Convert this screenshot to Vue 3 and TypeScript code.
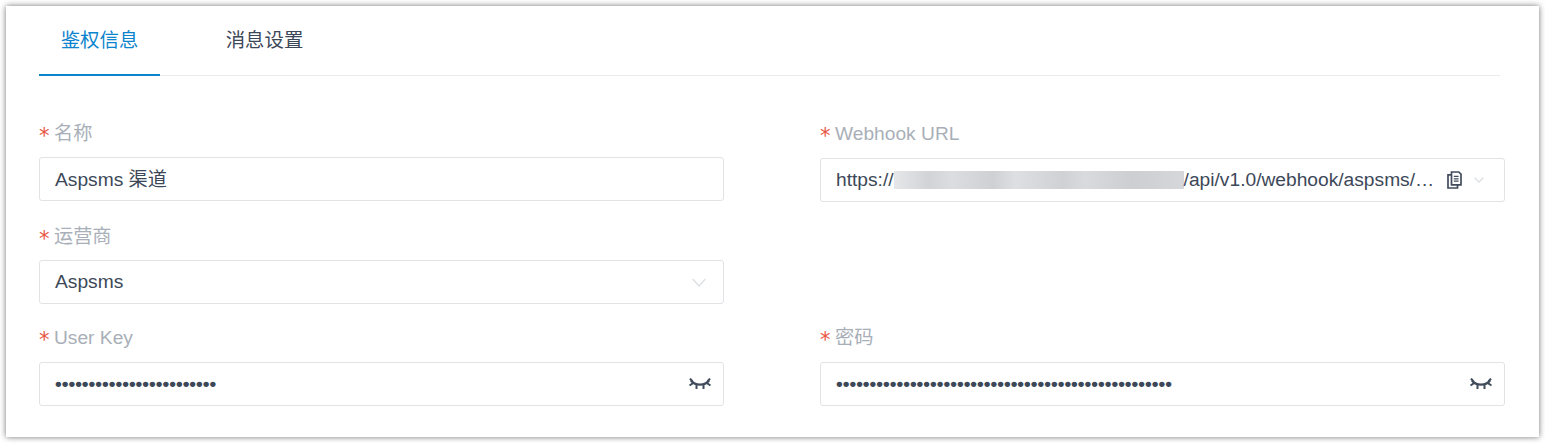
<script setup lang="ts">
import { ref } from 'vue'

const tabs = ['鉴权信息', '消息设置']
const activeTab = ref(0)
const userKey = '•'.repeat(24)
const password = '•'.repeat(50)
</script>

<template>
  <div class="page">
    <div class="card">
      <div class="tabs">
        <div
          v-for="(tab, i) in tabs"
          :key="tab"
          class="tab"
          :class="{ active: i === activeTab }"
          @click="activeTab = i"
        >
          {{ tab }}
        </div>
      </div>

      <div class="form">
        <div class="field">
          <label class="label"><span class="star">*</span>名称</label>
          <div class="control"><span class="value">Aspsms 渠道</span></div>
        </div>
        <div class="field">
          <label class="label shifted"><span class="star">*</span>Webhook URL</label>
          <div class="control">
            <span class="value url">https://<span class="mask"></span>/api/v1.0/webhook/aspsms/…</span>
            <svg class="copy" viewBox="0 0 15 18" width="15" height="18" fill="none" stroke="#414c5c" stroke-width="1.700">
              <path d="M4.500 1h7.200L14 3.200V13.800H4.500z" />
              <path d="M4.500 3.800H1V17h9.500v-3.200" />
              <path d="M6.800 5.400h4.800M6.800 7.800h4.800M6.800 10.200h4.800" stroke-width="1.300" />
            </svg>
            <svg class="chevron small" viewBox="0 0 10 6" width="10" height="6" fill="none" stroke="#dcdfe4" stroke-width="1.300">
              <path d="M.7.700L5 5l4.300-4.300" />
            </svg>
          </div>
        </div>

        <div class="field">
          <label class="label"><span class="star">*</span>运营商</label>
          <div class="control">
            <span class="value flat">Aspsms</span>
            <svg class="chevron" viewBox="0 0 14 9" width="14" height="9" fill="none" stroke="#dcdfe4" stroke-width="1.300">
              <path d="M.7 1l6.300 7 6.300-7" />
            </svg>
          </div>
        </div>
        <div class="field"></div>

        <div class="field">
          <label class="label shifted"><span class="star">*</span>User Key</label>
          <div class="control">
            <span class="value flat dots">{{ userKey }}</span>
            <svg class="eye" viewBox="0 0 22 13" width="22" height="13" fill="none" stroke="#414c5c" stroke-width="2.200">
              <path d="M2 2.500C6 8 16 8 20 2.500" />
              <path d="M1 .500l2.500 3M21 .500l-2.500 3M.500 7.500l3.500-2.300M21.500 7.500L18 5.200M7.500 6.500v4.500M14.500 6.500v4.500" stroke-width="2" />
            </svg>
          </div>
        </div>
        <div class="field">
          <label class="label shifted"><span class="star">*</span>密码</label>
          <div class="control">
            <span class="value flat dots">{{ password }}</span>
            <svg class="eye" viewBox="0 0 22 13" width="22" height="13" fill="none" stroke="#414c5c" stroke-width="2.200">
              <path d="M2 2.500C6 8 16 8 20 2.500" />
              <path d="M1 .500l2.500 3M21 .500l-2.500 3M.500 7.500l3.500-2.300M21.500 7.500L18 5.200M7.500 6.500v4.500M14.500 6.500v4.500" stroke-width="2" />
            </svg>
          </div>
        </div>
      </div>
    </div>
  </div>
</template>

<style>
body {
  background: #fff;
}
</style>

<style scoped>
.page {
  width: 1545px;
  height: 443px;
  padding: 6px;
  box-sizing: border-box;
  overflow: hidden;
  font-family: "Liberation Sans", "Noto Sans CJK SC", sans-serif;
}
.card {
  width: 1533px;
  height: 431px;
  box-sizing: border-box;
  padding: 0 34px 0 33px;
  background: #fff;
  box-shadow: 0 0 6px rgba(0, 0, 0, 0.55);
}
.tabs {
  display: flex;
  gap: 44px;
  height: 69px;
  width: 1461px;
  border-bottom: 1px solid #e9ebef;
}
.tab {
  width: 121px;
  box-sizing: border-box;
  padding-top: 21px;
  text-align: center;
  font-size: 19.400px;
  line-height: 26px;
  color: #3c4858;
  cursor: pointer;
}
.tab.active {
  color: #0b83cd;
  height: 70px;
  border-bottom: 2px solid #0b83cd;
}
.form {
  display: grid;
  grid-template-columns: 685px 685px;
  grid-template-rows: 103px 101px 102px;
  column-gap: 96px;
  padding-top: 45px;
}
.label {
  display: flex;
  align-items: center;
  height: 26px;
  margin-bottom: 10px;
  font-size: 19.200px;
  line-height: 26px;
  color: #a9afb8;
}
.label.shifted {
  margin-bottom: 11px;
}
.star {
  width: 15px;
  color: #e8553f;
  font-family: "DejaVu Sans", sans-serif;
  font-size: 21px;
  line-height: 26px;
  position: relative;
  top: 2px;
}
.control {
  display: flex;
  align-items: center;
  height: 44px;
  box-sizing: border-box;
  padding: 0 15px 0 15px;
  border: 1px solid #e1e3e7;
  border-radius: 3px;
  background: #fff;
}
.value {
  flex: 1;
  min-width: 0;
  font-size: 19.200px;
  line-height: 42px;
  height: 42px;
  color: #3c4858;
  white-space: nowrap;
  position: relative;
  top: 1px;
}
.value.flat {
  top: 0;
}
.url {
  display: flex;
  align-items: center;
  top: 0;
}
/* redacted host name: soft grey patches like the blurred original */
.mask {
  display: inline-block;
  width: 290px;
  height: 18px;
  background:
    linear-gradient(90deg, #e6e7e9 0, #d2d3d7 12%, #dcdde0 20%, #cfd0d4 34%, #dedfe2 42%, #d0d1d5 58%, #d9dadd 66%, #cdced2 82%, #d6d7da 100%);
}
.dots {
  font-weight: 700;
}
.copy {
  margin-right: 12px;
}
.chevron {
  margin-right: 2px;
}
.chevron.small {
  margin-right: 5px;
}
.eye {
  margin-right: -3px;
}
</style>
